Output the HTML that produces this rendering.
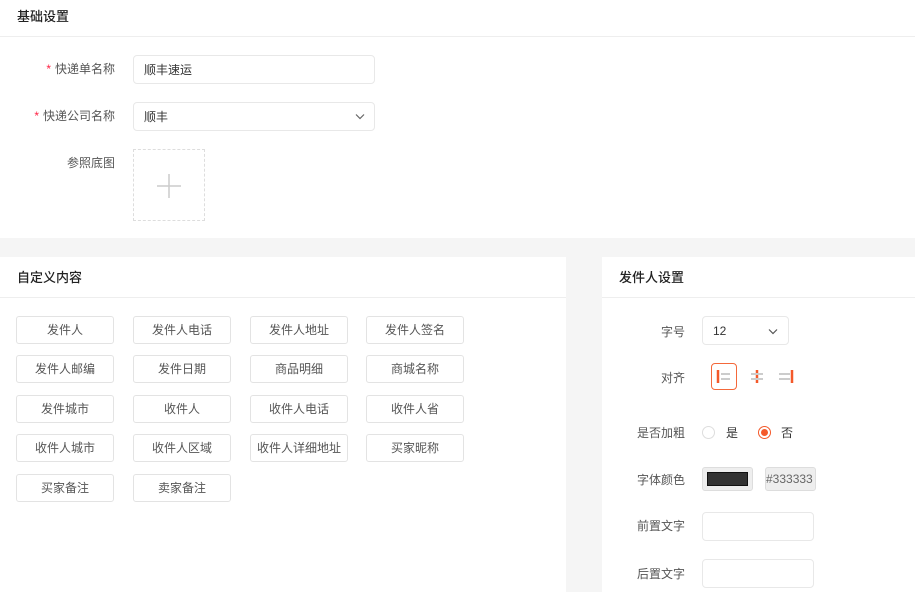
<!DOCTYPE html><html><head><meta charset="utf-8"><style>
*{box-sizing:border-box;margin:0;padding:0}
body{width:915px;height:592px;overflow:hidden;background:#f5f5f5;font-family:"Liberation Sans","Noto Sans CJK SC",sans-serif;font-size:12px;color:#333;position:relative}
.card{position:absolute;background:#fff}
.hd{height:37px;border-bottom:1px solid #eee;padding:6px 0 0 17px;font-size:13px;color:#222;font-weight:500}
.abs{position:absolute}
.lbl{position:absolute;color:#555;font-size:12px;text-align:right}
.inp{position:absolute;border:1px solid #e8e8e8;border-radius:4px;background:#fff;padding-left:10px;display:flex;align-items:center;color:#333}
.btn{position:absolute;width:98px;height:28px;border:1px solid #e3e3e3;border-radius:3px;text-align:center;line-height:26px;color:#555}
.star{color:#f24;margin-right:4px}
</style></head><body>
<div class="card" style="left:0;top:0;width:915px;height:238px">
<div class="hd" style="height:37px">基础设置</div>
<div class="lbl" style="left:0;width:115px;top:60px"><span class="star">*</span>快递单名称</div>
<div class="inp" style="left:133px;top:55px;width:242px;height:29px">顺丰速运</div>
<div class="lbl" style="left:0;width:115px;top:107px"><span class="star">*</span>快递公司名称</div>
<div class="inp" style="left:133px;top:102px;width:242px;height:29px">顺丰<svg class="abs" style="right:9px;top:10px" width="10" height="7" viewBox="0 0 10 7"><path d="M1 1.5l4 4 4-4" fill="none" stroke="#666" stroke-width="1.2"/></svg></div>
<div class="lbl" style="left:0;width:115px;top:154px">参照底图</div>
<div class="abs" style="left:133px;top:149px;width:72px;height:72px;border:1px dashed #ddd"><svg class="abs" style="left:23px;top:24px" width="24" height="24"><path d="M12 0v24M0 12h24" stroke="#ccc" stroke-width="1.5"/></svg></div>
</div>
<div class="card" style="left:0;top:257px;width:566px;height:335px">
<div class="hd" style="height:41px;padding-top:10px">自定义内容</div>
</div>
<div class="btn" style="left:16px;top:316px">发件人</div>
<div class="btn" style="left:133px;top:316px">发件人电话</div>
<div class="btn" style="left:250px;top:316px">发件人地址</div>
<div class="btn" style="left:366px;top:316px">发件人签名</div>
<div class="btn" style="left:16px;top:355px">发件人邮编</div>
<div class="btn" style="left:133px;top:355px">发件日期</div>
<div class="btn" style="left:250px;top:355px">商品明细</div>
<div class="btn" style="left:366px;top:355px">商城名称</div>
<div class="btn" style="left:16px;top:395px">发件城市</div>
<div class="btn" style="left:133px;top:395px">收件人</div>
<div class="btn" style="left:250px;top:395px">收件人电话</div>
<div class="btn" style="left:366px;top:395px">收件人省</div>
<div class="btn" style="left:16px;top:434px">收件人城市</div>
<div class="btn" style="left:133px;top:434px">收件人区域</div>
<div class="btn" style="left:250px;top:434px">收件人详细地址</div>
<div class="btn" style="left:366px;top:434px">买家昵称</div>
<div class="btn" style="left:16px;top:474px">买家备注</div>
<div class="btn" style="left:133px;top:474px">卖家备注</div>
<div class="card" style="left:602px;top:257px;width:313px;height:335px">
<div class="hd" style="height:41px;padding-top:10px">发件人设置</div>
</div>
<div class="lbl" style="left:602px;width:83px;top:323px">字号</div>
<div class="inp" style="left:702px;top:316px;width:87px;height:29px">12<svg class="abs" style="right:10px;top:11px" width="10" height="7" viewBox="0 0 10 7"><path d="M1 1.5l4 4 4-4" fill="none" stroke="#555" stroke-width="1.2"/></svg></div>
<div class="lbl" style="left:602px;width:83px;top:369px">对齐</div>
<div class="abs" style="left:711px;top:363px;width:26px;height:27px;border:1px solid #f4683a;border-radius:4px"></div>
<svg class="abs" style="left:711px;top:363px" width="90" height="27">
<path d="M7 7v13" stroke="#f4592a" stroke-width="2.5"/><path d="M10 11h9M10 16h9" stroke="#ccc" stroke-width="2"/>
<path d="M46 7v13" stroke="#f4592a" stroke-width="2.5"/><path d="M40 11h12M40 16h12" stroke="#ccc" stroke-width="2"/>
<path d="M81 7v13" stroke="#f4592a" stroke-width="2.5"/><path d="M68 11h11M68 16h11" stroke="#ccc" stroke-width="2"/>
</svg>
<div class="lbl" style="left:602px;width:83px;top:424px">是否加粗</div>
<div class="abs" style="left:702px;top:426px;width:13px;height:13px;border:1px solid #ddd;border-radius:50%"></div>
<div class="abs" style="left:726px;top:424px">是</div>
<div class="abs" style="left:758px;top:426px;width:13px;height:13px;border:1px solid #f4592a;border-radius:50%"><div style="margin:2px;width:7px;height:7px;border-radius:50%;background:#f4592a"></div></div>
<div class="abs" style="left:781px;top:424px">否</div>
<div class="lbl" style="left:602px;width:83px;top:471px">字体颜色</div>
<div class="abs" style="left:702px;top:467px;width:51px;height:24px;border:1px solid #ddd;border-radius:3px;background:#eee;padding:4px"><div style="width:41px;height:14px;background:#333;border:1px solid #111"></div></div>
<div class="abs" style="left:765px;top:467px;width:51px;height:24px;border:1px solid #ddd;border-radius:3px;background:#eee;color:#666;line-height:22px;font-size:12px">#333333</div>
<div class="lbl" style="left:602px;width:83px;top:517px">前置文字</div>
<div class="inp" style="left:702px;top:512px;width:112px;height:29px"></div>
<div class="lbl" style="left:602px;width:83px;top:565px">后置文字</div>
<div class="inp" style="left:702px;top:559px;width:112px;height:29px"></div>
</body></html>
